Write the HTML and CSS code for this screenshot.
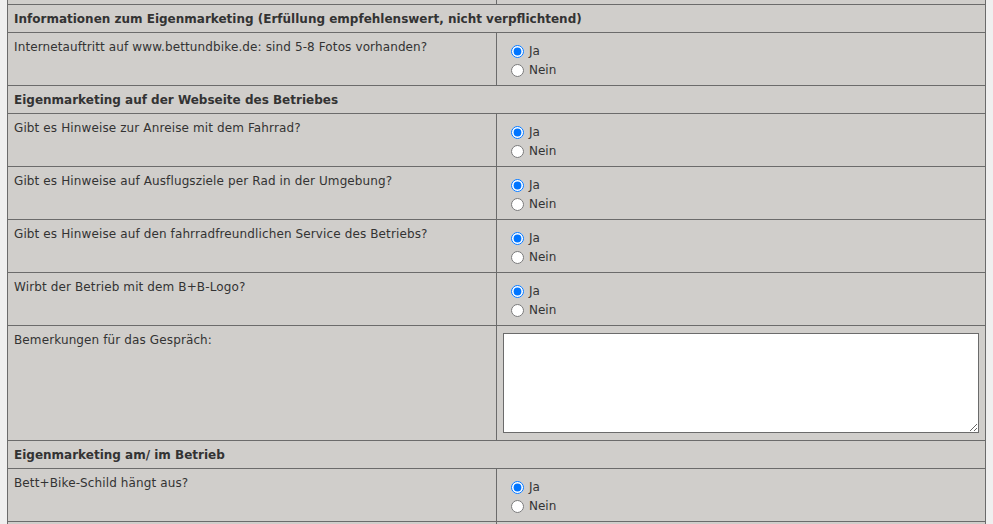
FILE: index.html
```html
<!DOCTYPE html>
<html lang="de">
<head>
<meta charset="utf-8">
<link rel="stylesheet" href="styles.css">
</head>
<body>
<table class="form">
  <colgroup><col class="c1"><col class="c2"></colgroup>
  <tr class="stub"><td class="q"></td><td class="a"></td></tr>
  <tr><th colspan="2">Informationen zum Eigenmarketing (Erfüllung empfehlenswert, nicht verpflichtend)</th></tr>
  <tr>
    <td class="q">Internetauftritt auf www.bettundbike.de: sind 5-8 Fotos vorhanden?</td>
    <td class="a"><label class="opt"><input type="radio" name="r1" checked> Ja</label><label class="opt"><input type="radio" name="r1"> Nein</label></td>
  </tr>
  <tr><th colspan="2">Eigenmarketing auf der Webseite des Betriebes</th></tr>
  <tr>
    <td class="q">Gibt es Hinweise zur Anreise mit dem Fahrrad?</td>
    <td class="a"><label class="opt"><input type="radio" name="r2" checked> Ja</label><label class="opt"><input type="radio" name="r2"> Nein</label></td>
  </tr>
  <tr>
    <td class="q">Gibt es Hinweise auf Ausflugsziele per Rad in der Umgebung?</td>
    <td class="a"><label class="opt"><input type="radio" name="r3" checked> Ja</label><label class="opt"><input type="radio" name="r3"> Nein</label></td>
  </tr>
  <tr>
    <td class="q">Gibt es Hinweise auf den fahrradfreundlichen Service des Betriebs?</td>
    <td class="a"><label class="opt"><input type="radio" name="r4" checked> Ja</label><label class="opt"><input type="radio" name="r4"> Nein</label></td>
  </tr>
  <tr>
    <td class="q">Wirbt der Betrieb mit dem B+B-Logo?</td>
    <td class="a"><label class="opt"><input type="radio" name="r5" checked> Ja</label><label class="opt"><input type="radio" name="r5"> Nein</label></td>
  </tr>
  <tr>
    <td class="q">Bemerkungen für das Gespräch:</td>
    <td class="a ta"><textarea class="notes"></textarea></td>
  </tr>
  <tr><th colspan="2">Eigenmarketing am/ im Betrieb</th></tr>
  <tr>
    <td class="q">Bett+Bike-Schild hängt aus?</td>
    <td class="a"><label class="opt"><input type="radio" name="r6" checked> Ja</label><label class="opt"><input type="radio" name="r6"> Nein</label></td>
  </tr>
  <tr class="stub"><td class="q"></td><td class="a"></td></tr>
</table>
</body>
</html>
```
FILE: styles.css
```css
html, body {
  margin: 0;
  padding: 0;
  background: #efefef;
}
body {
  font-family: "DejaVu Sans", Verdana, sans-serif;
  font-size: 12px;
  color: #333;
}
.form {
  border-collapse: collapse;
  table-layout: fixed;
  margin-left: 7px;
  margin-top: -1px;
  width: 979px;
  background: #d0cecb;
}
.form .c1 {
  width: 489px;
}
.form td, .form th {
  border: 1px solid #6b6b6b;
  vertical-align: top;
  text-align: left;
}
.form th {
  font-weight: bold;
  padding: 6px 6px 5px;
  height: 16px;
  line-height: 16px;
}
.form td.q {
  padding: 6px 6px;
  line-height: 16px;
  height: 40px;
  letter-spacing: 0.12px;
}
.form td.a {
  padding: 9px 6px 4px;
}
.form tr.stub td {
  height: 4px;
  padding: 0;
}
.opt {
  display: flex;
  align-items: center;
  height: 19px;
  line-height: 19px;
}
.opt input {
  margin: 0 5px 0 8px;
  width: 13px;
  height: 13px;
}
.form td.ta {
  padding: 7px 6px 7px 6px;
}
.notes {
  display: block;
  box-sizing: border-box;
  width: 476px;
  height: 100px;
  margin: 0;
  border: 1px solid #6b6b6b;
  background: #fff;
  resize: both;
}
```
